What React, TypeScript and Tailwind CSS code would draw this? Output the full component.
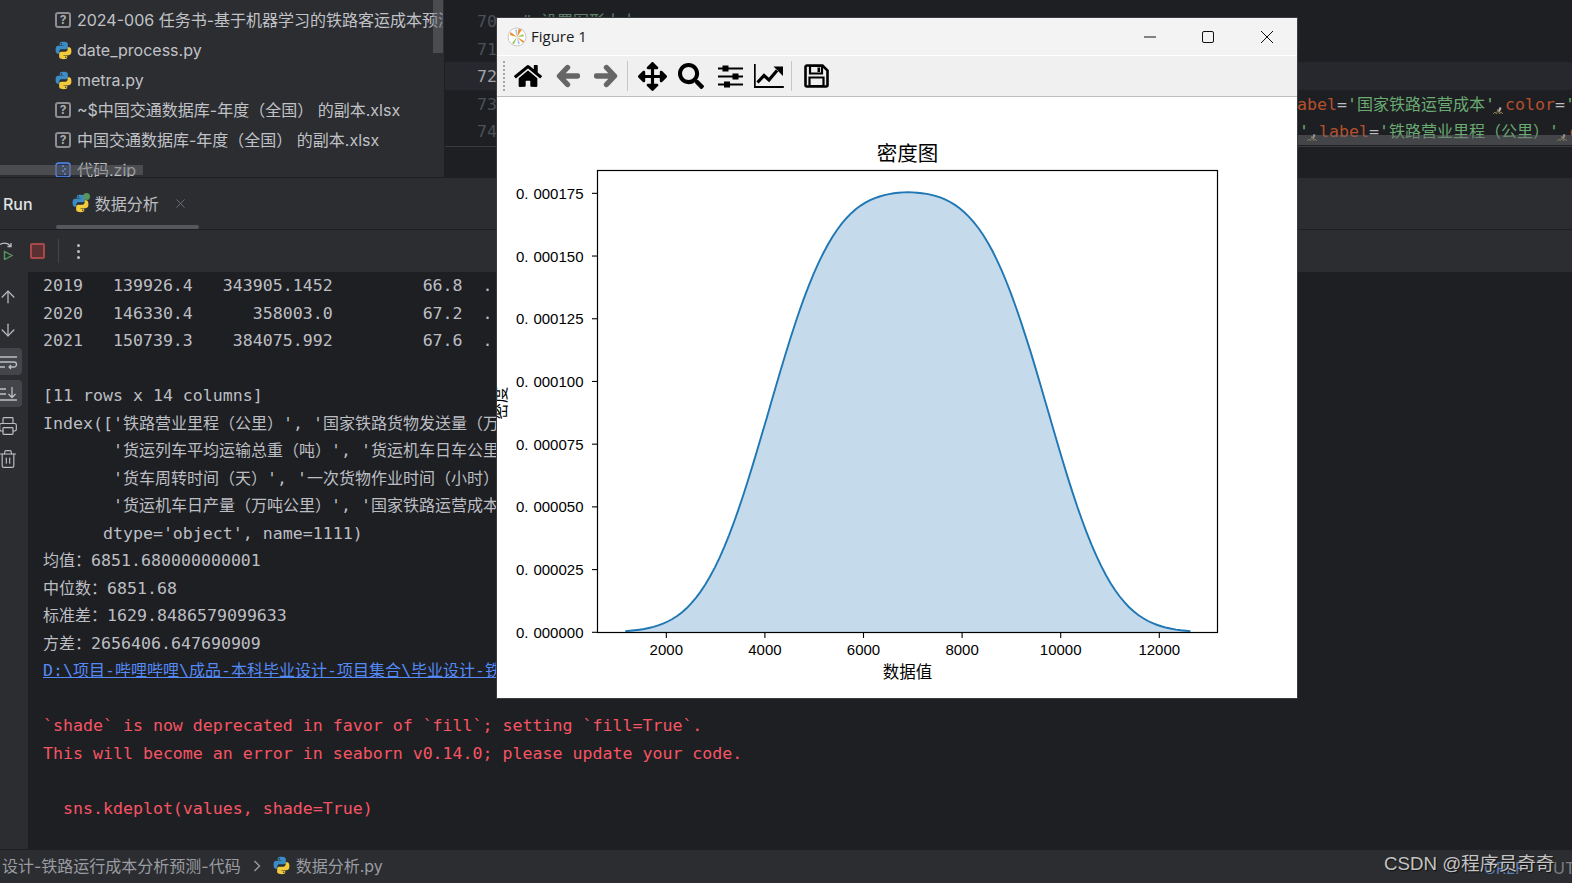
import { Fragment, type ReactNode } from 'react';
import { ArrowDown, ArrowUp, Printer, Trash2, X } from 'lucide-react';
import { FaArrowsAlt, FaHome, FaSearch } from 'react-icons/fa';

const uiFont = 'font-["Inter","Noto_Sans_CJK_SC",sans-serif]';
const monoFont = 'font-["DejaVu_Sans_Mono","Noto_Sans_CJK_SC",monospace]';

// CJK glyphs are 16px wide in the console, latin cells are 10px
const Mono = ({ text }: { text: string }) => (
  <>
    {text.split(/([\u3000-\u9fff\uff00-\uffef]+)/).map((part, i) =>
      i % 2 ? (
        <span key={i} className="text-[16px]">
          {part}
        </span>
      ) : (
        <Fragment key={i}>{part}</Fragment>
      ),
    )}
  </>
);

const PythonIcon = ({ className = 'h-[19px] w-[19px]' }: { className?: string }) => {
  const snake =
    'M11.9 1C7 1 7.3 3.1 7.3 3.1v2.2h4.7V6H5.4S2 5.6 2 10.9s3 5.1 3 5.1h1.8v-2.5s-.1-3 2.9-3h5s2.8 0 2.8-2.7V3.4S17 1 11.9 1zM9.2 2.5a.9.9 0 110 1.8.9.9 0 010-1.8z';
  return (
    <svg viewBox="0 0 24 24" className={`shrink-0 ${className}`}>
      <path d={snake} fill="#3b8cc4" fillRule="evenodd" />
      <path d={snake} fill="#f2cb3d" fillRule="evenodd" transform="rotate(180 12 12)" />
    </svg>
  );
};

const UnknownIcon = () => (
  <span className="ml-px flex h-[16px] w-[16px] shrink-0 items-center justify-center rounded-[3px] border-2 border-[#8c8e94] text-[12px] leading-none font-bold text-[#a8aab0]">
    ?
  </span>
);

const ZipIcon = () => (
  <svg viewBox="0 0 16 16" className="ml-px h-[16px] w-[16px] shrink-0">
    <rect x="1" y="1" width="14" height="14" rx="2.5" fill="#25324d" stroke="#548af7" strokeWidth="1.4" />
    <path d="M7 3h2v2H7zM9 6h2v2H9zM7 8h2v2H7zM9 11h2v2H9z" fill="#548af7" />
  </svg>
);

const treeRows: { icon: ReactNode; label: string }[] = [
  { icon: <UnknownIcon />, label: '2024-006 任务书-基于机器学习的铁路客运成本预测' },
  { icon: <PythonIcon />, label: 'date_process.py' },
  { icon: <PythonIcon />, label: 'metra.py' },
  { icon: <UnknownIcon />, label: '~$中国交通数据库-年度（全国） 的副本.xlsx' },
  { icon: <UnknownIcon />, label: '中国交通数据库-年度（全国） 的副本.xlsx' },
  { icon: <ZipIcon />, label: '代码.zip' },
];

const ProjectTree = () => (
  <div className={`relative h-full w-[445px] shrink-0 overflow-hidden border-r border-[#1e1f22] bg-[#2b2d30] pt-[5px] ${uiFont}`}>
    {treeRows.map((row) => (
      <div key={row.label} className="flex h-[30px] w-[443px] items-center overflow-hidden pl-[54px] text-[16px] whitespace-nowrap text-[#c0c2c8]">
        <span className="flex w-[23px] shrink-0 items-center">{row.icon}</span>
        {row.label}
      </div>
    ))}
    <div className="absolute top-0 left-[433px] h-[53px] w-[10px] bg-[#6a6b70]/50" />
    <div className="absolute top-[165px] left-0 h-[10px] w-[143px] bg-[#6a6b70]/50" />
  </div>
);

const Squiggle = () => (
  <svg viewBox="0 0 10 6" className="absolute -bottom-[1px] -left-[2px] h-[6px] w-[10px]">
    <path d="M0 5l2-2 1.5 2L5 0l1.5 5L8 3l2 2" fill="none" stroke="#8a7a52" strokeWidth="1" />
  </svg>
);

const Comma = () => (
  <span className="relative text-[#bcbec4]">
    ,
    <Squiggle />
  </span>
);

const Editor = () => (
  <div className={`relative h-full min-w-0 flex-1 overflow-hidden bg-[#1e1f22] pt-[7px] text-[16.6px] whitespace-pre ${monoFont}`}>
    <div className="flex h-[27.5px] items-center pt-[4px]">
      <span className="w-[52px] shrink-0 text-right text-[#4b5059]">70</span>
      <span className="ml-[24px] text-[#5f826b]">
        # <Mono text="设置图形大小" />
      </span>
    </div>
    <div className="flex h-[27.5px] items-center pt-[4px]">
      <span className="w-[52px] shrink-0 text-right text-[#4b5059]">71</span>
    </div>
    <div className="flex h-[27.5px] items-center bg-[#26282e] pt-[4px]">
      <span className="w-[52px] shrink-0 text-right text-[#a1a3ab]">72</span>
    </div>
    <div className="flex h-[27.5px] items-center pt-[4px]">
      <span className="w-[52px] shrink-0 text-right text-[#4b5059]">73</span>
      <span className="ml-[790px]">
        <span className="text-[#b5502d]">label</span>
        <span className="text-[#bcbec4]">=</span>
        <span className="text-[#6aab73]">
          '<Mono text="国家铁路运营成本" />'
        </span>
        <Comma />
        <span className="text-[#b5502d]">color</span>
        <span className="text-[#bcbec4]">=</span>
        <span className="text-[#6aab73]">'red'</span>
      </span>
    </div>
    <div className="flex h-[27.5px] items-center pt-[4px]">
      <span className="w-[52px] shrink-0 text-right text-[#4b5059]">74</span>
      <span className="ml-[802px]">
        <span className="text-[#6aab73]">'</span>
        <Comma />
        <span className="text-[#b5502d]">label</span>
        <span className="text-[#bcbec4]">=</span>
        <span className="text-[#6aab73]">
          '<Mono text="铁路营业里程（公里）" />'
        </span>
        <Comma />
        <span className="text-[#b5502d]">color</span>
      </span>
    </div>
    <div className="absolute top-[135px] right-0 left-[600px] h-[10px] bg-[#6a6b70]/50" />
    <div className="absolute top-[146px] right-0 left-0 h-px bg-[#393b40]" />
  </div>
);

const RunTabs = () => (
  <div className={`relative flex h-[53px] shrink-0 items-center border-t border-b border-[#1e1f22] bg-[#2b2d30] ${uiFont}`}>
    <span className="ml-[3px] text-[16px] font-medium text-[#dfe1e5]">Run</span>
    <span className="relative ml-[38px] flex items-center">
      <PythonIcon />
      <span className="absolute -top-[1px] left-[12px] h-[7px] w-[7px] rounded-full bg-[#57965c]" />
    </span>
    <span className="ml-[5px] text-[16px] text-[#bcbec4]">数据分析</span>
    <X className="ml-[14px] h-[15px] w-[15px] text-[#6f737a]" strokeWidth={1.5} />
    <div className="absolute bottom-0 left-[56px] h-[4px] w-[143px] rounded-[2px] bg-[#55575c]" />
  </div>
);

const RunToolbar = () => (
  <div className="flex h-[42px] shrink-0 items-center bg-[#2b2d30]">
    <svg viewBox="0 0 14 18" className="h-[18px] w-[14px] shrink-0">
      <path d="M0 2.5C4 .5 8 1 10.5 4" fill="none" stroke="#bcbec4" strokeWidth="1.3" />
      <path d="M11 1v3.5H7.5" fill="none" stroke="#bcbec4" strokeWidth="1.3" />
      <path d="M4.5 9.5l7.5 4-7.5 4z" fill="none" stroke="#57965c" strokeWidth="1.4" />
    </svg>
    <span className="ml-[16px] h-[16px] w-[15px] rounded-[2px] border-2 border-[#a84a4a] bg-[#5a3033]" />
    <span className="ml-[13px] h-[24px] w-px bg-[#43454a]" />
    <span className="ml-[18px] flex flex-col gap-[3px]">
      <span className="h-[3px] w-[3px] rounded-full bg-[#bcbec4]" />
      <span className="h-[3px] w-[3px] rounded-full bg-[#bcbec4]" />
      <span className="h-[3px] w-[3px] rounded-full bg-[#bcbec4]" />
    </span>
  </div>
);

const Rail = () => (
  <div className="flex w-[28px] shrink-0 flex-col items-start bg-[#2b2d30] pt-[15px] text-[#bcbec4]">
    <ArrowUp className="-ml-[2px] h-[20px] w-[20px]" strokeWidth={1.5} />
    <ArrowDown className="-ml-[2px] mt-[13px] h-[20px] w-[20px]" strokeWidth={1.5} />
    <div className="mt-[8px] flex h-[27px] w-[22px] items-center rounded-r-[4px] bg-[#43454a]">
      <svg viewBox="0 0 18 16" className="h-[16px] w-[18px]" fill="none" stroke="#bcbec4" strokeWidth="1.3">
        <path d="M0 3h17M0 8h14a2.5 2.5 0 010 5H9M0 13h5M11 11l-2 2 2 2" />
      </svg>
    </div>
    <div className="mt-[5px] flex h-[27px] w-[22px] items-center rounded-r-[4px] bg-[#43454a]">
      <svg viewBox="0 0 18 16" className="h-[16px] w-[18px]" fill="none" stroke="#bcbec4" strokeWidth="1.3">
        <path d="M0 3h6M0 8h6M0 14h17M12 1v10M8.5 8l3.5 3.5L15.500 8" />
      </svg>
    </div>
    <Printer className="-ml-[2px] mt-[9px] h-[20px] w-[20px]" strokeWidth={1.4} />
    <Trash2 className="-ml-[2px] mt-[13px] h-[20px] w-[20px]" strokeWidth={1.4} />
  </div>
);

const consoleLines: { text: string; tone?: 'link' | 'error' }[] = [
  { text: '2019   139926.4   343905.1452         66.8  ...' },
  { text: '2020   146330.4      358003.0         67.2  ...' },
  { text: '2021   150739.3    384075.992         67.6  ...' },
  { text: '' },
  { text: '[11 rows x 14 columns]' },
  { text: "Index(['铁路营业里程（公里）', '国家铁路货物发送量（万吨）'," },
  { text: "       '货运列车平均运输总重（吨）', '货运机车日车公里（公里）'," },
  { text: "       '货车周转时间（天）', '一次货物作业时间（小时）'," },
  { text: "       '货运机车日产量（万吨公里）', '国家铁路运营成本'," },
  { text: "      dtype='object', name=1111)" },
  { text: '均值：6851.680000000001' },
  { text: '中位数：6851.68' },
  { text: '标准差：1629.8486579099633' },
  { text: '方差：2656406.647690909' },
  { text: 'D:\\项目-哔哩哔哩\\成品-本科毕业设计-项目集合\\毕业设计-铁路运行成本分析预测', tone: 'link' },
  { text: '' },
  { text: '`shade` is now deprecated in favor of `fill`; setting `fill=True`.', tone: 'error' },
  { text: 'This will become an error in seaborn v0.14.0; please update your code.', tone: 'error' },
  { text: '' },
  { text: '  sns.kdeplot(values, shade=True)', tone: 'error' },
];

const Console = () => (
  <div className="flex min-h-0 flex-1 overflow-hidden border-b border-[#1e1f22] bg-[#1e1f22]">
    <Rail />
    <div className={`min-w-0 flex-1 pl-[15px] text-[16.6px] whitespace-pre text-[#bcbec4] ${monoFont}`}>
      {consoleLines.map((line, i) => (
        <div
          key={i}
          className={`h-[27.5px] leading-[27.5px] ${line.tone === 'link' ? 'text-[#548af7] underline' : ''} ${line.tone === 'error' ? 'text-[#f75464]' : ''}`}
        >
          <Mono text={line.text} />
        </div>
      ))}
    </div>
  </div>
);

const StatusBar = () => (
  <div className={`relative flex h-[33px] shrink-0 items-center bg-[#2b2d30] pb-[2px] pl-[2px] text-[16px] text-[#9a9ca2] ${uiFont}`}>
    <span>设计-铁路运行成本分析预测-代码</span>
    <svg viewBox="0 0 8 12" className="ml-[12px] h-[12px] w-[8px]" fill="none" stroke="#9a9ca2" strokeWidth="1.4">
      <path d="M1.500 1l5 5-5 5" />
    </svg>
    <PythonIcon className="ml-[11px] h-[19px] w-[19px]" />
    <span className="ml-[5px]">数据分析.py</span>
    <span className="absolute top-[6px] left-[1484px] text-[#5c7fb8]">CRLF</span>
    <span className="absolute top-[6px] left-[1553px] text-[#7d8087]">UTF-8</span>
    <span className='absolute top-0 left-[1384px] font-["Liberation_Sans","Noto_Sans_CJK_SC",sans-serif] text-[18.700px] text-[#c4c4c4] [text-shadow:1px_1px_1px_#111]'>
      CSDN @程序员奇奇
    </span>
  </div>
);

// gaussian kde over an evenly spread sample, same shape as the seaborn plot
const sample = Array.from({ length: 11 }, (_, i) => 4335 + i * 515);
const bandwidth = 1050;
const density = (v: number) =>
  sample.reduce((sum, s) => sum + Math.exp(-((v - s) ** 2) / (2 * bandwidth ** 2)), 0) /
  (sample.length * bandwidth * Math.sqrt(2 * Math.PI));
const toX = (v: number) => 169.3 + (v - 2000) * 0.0493;
const toY = (d: number) => 534.3 - d * 2508600;
const curvePoints = Array.from({ length: 121 }, (_, i) => 1168 + (i * (12630 - 1168)) / 120).map(
  (v) => `${toX(v).toFixed(1)},${toY(density(v)).toFixed(1)}`,
);
const curve = `M${curvePoints.join('L')}`;
const area = `M${toX(1168).toFixed(1)},534.3L${curvePoints.join('L')}L${toX(12630).toFixed(1)},534.3Z`;

const yTicks = ['000000', '000025', '000050', '000075', '000100', '000125', '000150', '000175'];
const xTicks = [2000, 4000, 6000, 8000, 10000, 12000];

const DensityPlot = () => (
  <svg width="800" height="600" viewBox="0 0 800 600" className='mt-px block bg-white font-["Liberation_Sans","Noto_Sans_CJK_SC",sans-serif] text-[15px]'>
    <path d={area} fill="#c5daeb" />
    <path d={curve} fill="none" stroke="#1f77b4" strokeWidth="1.900" />
    <rect x="100.500" y="72.500" width="620" height="462" fill="none" stroke="#000" strokeWidth="1.200" />
    {yTicks.map((label, i) => {
      const y = 534.3 - i * 62.71;
      return (
        <g key={label}>
          <line x1="95" x2="100" y1={y} y2={y} stroke="#000" strokeWidth="1.100" />
          <text x="86.500" y={y + 5.5} textAnchor="end" fill="#000">
            0.
            <tspan dx="5">{label}</tspan>
          </text>
        </g>
      );
    })}
    {xTicks.map((v) => (
      <g key={v}>
        <line x1={toX(v)} x2={toX(v)} y1="534.500" y2="540" stroke="#000" strokeWidth="1.100" />
        <text x={toX(v)} y="557" textAnchor="middle" fill="#000">
          {v}
        </text>
      </g>
    ))}
    <text x="410.500" y="63" textAnchor="middle" fontSize="20.500" fill="#000">
      密度图
    </text>
    <text x="410.500" y="580" textAnchor="middle" fontSize="16.500" fill="#000">
      数据值
    </text>
    <text transform="translate(9 305) rotate(-90)" textAnchor="middle" fontSize="16.500" fill="#000">
      密度
    </text>
  </svg>
);

const FigureLogo = () => (
  <svg viewBox="0 0 20 20" className="h-[20px] w-[20px] shrink-0">
    <circle cx="10" cy="10" r="9" fill="#fff" stroke="#c9c9c9" strokeWidth="1" />
    <path d="M10 10L3.500 5 3 8zM10 10L15 2.500 11.500 2zM10 10l7 4-1 2z" fill="#f28c28" />
    <path d="M10 10l-5 6 2 1.500zM10 10l6-3 1 2.500z" fill="#9ccc65" />
    <path d="M10 10V2.500L8 3zM10 10l1 7.500 2-1z" fill="#a5c8e4" />
  </svg>
);

const ArrowIcon = ({ flip }: { flip?: boolean }) => (
  <svg viewBox="0 0 24 24" className={`h-[24px] w-[24px] shrink-0 ${flip ? '-scale-x-100' : ''}`}>
    <path d="M11.500 3.500L3.500 12l8 8.500M4 12h17.500" fill="none" stroke="#666" strokeWidth="5.400" strokeLinecap="round" strokeLinejoin="round" />
  </svg>
);

const SlidersIcon = () => (
  <svg viewBox="0 0 25 23" className="h-[23px] w-[25px] shrink-0">
    <path d="M0 3.500h25M0 11.500h25M0 19.500h25" stroke="#000" strokeWidth="1.800" />
    <path d="M4.500 .5h6v6h-6zM14.500 8.500h6v6h-6zM6 16.500h6v6H6z" fill="#000" />
  </svg>
);

const TrendIcon = () => (
  <svg viewBox="0 0 30 24" className="h-[24px] w-[30px] shrink-0">
    <path d="M.8 0v23h29" fill="none" stroke="#000" strokeWidth="1.800" />
    <path d="M3.500 18.500L10 11.500l5 4.500 8-9.500" fill="none" stroke="#000" strokeWidth="3.200" />
    <path d="M19.500 2.500H29V12z" fill="#000" />
  </svg>
);

const SaveIcon = () => (
  <svg viewBox="0 0 25 24" className="h-[24px] w-[25px] shrink-0">
    <path d="M1.500 3a1.500 1.500 0 011.500-1.500h15.500L23.500 6.500V21a1.500 1.500 0 01-1.500 1.500H3A1.500 1.500 0 011.500 21z" fill="none" stroke="#000" strokeWidth="2.600" />
    <path d="M6 2h12v7.500H6zM5.500 13.500h14V22h-14z" fill="none" stroke="#000" strokeWidth="2.200" />
    <path d="M13.500 3.500h2.500v4.500h-2.500z" fill="#000" />
  </svg>
);

const FigureWindow = () => (
  <div className="absolute top-[17px] left-[496px] w-[802px] border border-[#3a3c40] bg-white">
    <div className='flex h-[37px] items-center bg-[#f3f3f3] pr-[23px] pl-[10px] font-["Open_Sans",sans-serif] text-[15px] whitespace-nowrap text-[#1a1a1a]'>
      <FigureLogo />
      <span className="ml-[4px]">Figure 1</span>
      <svg viewBox="0 0 14 14" className="mr-[44px] ml-auto h-[14px] w-[14px]" fill="none" stroke="#111" strokeWidth="1">
        <path d="M1 7h12" />
      </svg>
      <svg viewBox="0 0 14 14" className="mr-[45px] h-[14px] w-[14px]" fill="none" stroke="#111" strokeWidth="1">
        <rect x="1.500" y="1.500" width="11" height="11" rx="1.500" />
      </svg>
      <svg viewBox="0 0 14 14" className="h-[14px] w-[14px]" fill="none" stroke="#111" strokeWidth="1">
        <path d="M1 1l12 12M13 1L1 13" />
      </svg>
    </div>
    <div className="flex h-[42px] items-center border-t border-b border-t-white border-b-[#bdbdbd] bg-[#f0f0f0] pl-[6px]">
      <span className="h-[30px] w-[2px] border-l-2 border-dotted border-[#a8a8a8]" />
      <FaHome className="ml-[9px] h-[26px] w-[28px] text-black" />
      <span className="ml-[14px]">
        <ArrowIcon />
      </span>
      <span className="ml-[14px]">
        <ArrowIcon flip />
      </span>
      <span className="ml-[9px] h-[30px] w-px bg-[#c8c8c8]" />
      <FaArrowsAlt className="ml-[10px] h-[29px] w-[29px] text-black" />
      <FaSearch className="ml-[11px] h-[26px] w-[26px] text-black" />
      <span className="ml-[14px]">
        <SlidersIcon />
      </span>
      <span className="ml-[11px]">
        <TrendIcon />
      </span>
      <span className="ml-[7px] h-[30px] w-px bg-[#c8c8c8]" />
      <span className="ml-[12px]">
        <SaveIcon />
      </span>
    </div>
    <DensityPlot />
  </div>
);

export default function App() {
  return (
    <div className="relative flex h-[883px] w-[1572px] flex-col overflow-hidden bg-[#1e1f22]">
      <div className="flex h-[177px] shrink-0">
        <ProjectTree />
        <Editor />
      </div>
      <RunTabs />
      <RunToolbar />
      <Console />
      <StatusBar />
      <FigureWindow />
    </div>
  );
}
